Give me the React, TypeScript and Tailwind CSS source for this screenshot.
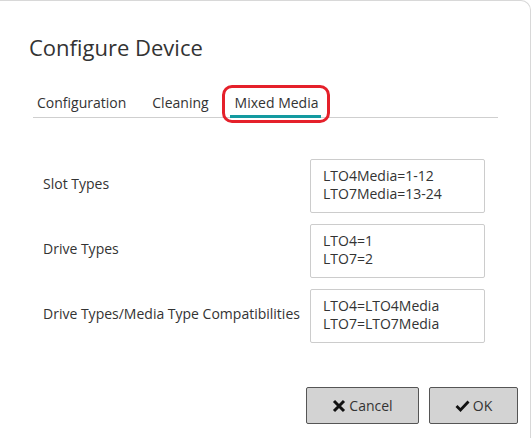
import React from "react";

const rows: { label: string; lines: string[] }[] = [
  { label: "Slot Types", lines: ["LTO4Media=1-12", "LTO7Media=13-24"] },
  { label: "Drive Types", lines: ["LTO4=1", "LTO7=2"] },
  { label: "Drive Types/Media Type Compatibilities", lines: ["LTO4=LTO4Media", "LTO7=LTO7Media"] },
];

function XIcon() {
  return (
    <svg width="14" height="14" viewBox="0 0 14 14">
      <path d="M2 2 L12 12 M12 2 L2 12" stroke="#111" strokeWidth="3" strokeLinecap="butt" />
    </svg>
  );
}

function CheckIcon() {
  return (
    <svg width="15" height="12" viewBox="0 0 15 12">
      <path d="M1.5 6 L5.5 10 L13.5 1.5" stroke="#111" strokeWidth="2.8" fill="none" />
    </svg>
  );
}

export default function App() {
  return (
    <div
      className="relative w-[531px] h-[438px] bg-white overflow-hidden text-[#333]"
      style={{ fontFamily: '"Open Sans", "Noto Sans", sans-serif' }}
    >
      {/* dialog frame */}
      <div className="absolute inset-0 rounded-tr-[10px] border-t border-r border-[#d8d8d8] pointer-events-none" />

      <div className="pl-[29px] pt-[30px]">
        <h1 className="text-[22px] leading-[34px] text-[#333]">Configure Device</h1>
      </div>

      {/* tabs */}
      <div className="relative mx-[33px] mt-[15px] flex h-[39px] items-start border-b border-[#cfcfcf] text-[14px]">
        <div className="pl-[4px] pt-[14px] leading-[20px]">Configuration</div>
        <div className="pl-[26px] pt-[14px] leading-[20px]">Cleaning</div>
        <div className="ml-[21px] flex flex-col pt-[14px]">
          <div className="px-[5px] leading-[20px]">Mixed Media</div>
          <div className="mt-[2px] h-[3px] w-[91px] bg-[#139aa0]" />
        </div>
        <div className="absolute left-[189px] top-[6px] h-[38px] w-[108px] rounded-[10px] border-[3px] border-[#e5202a]" />
      </div>

      {/* fields */}
      <div className="mt-[41px] flex flex-col gap-[11px] pl-[43px] text-[14px]">
        {rows.map((r) => (
          <div key={r.label} className="flex items-center">
            <div className="mb-[4px] w-[267px] leading-[20px]">{r.label}</div>
            <div className="h-[54px] w-[175px] rounded-[2px] border border-[#cccccc] pl-[12px] pt-[7px] leading-[18px]">
              {r.lines.map((l) => (
                <div key={l}>{l}</div>
              ))}
            </div>
          </div>
        ))}
      </div>

      {/* actions */}
      <div className="mt-[44px] flex justify-end gap-[10px] pr-[13px] text-[14px]">
        <button className="flex h-[37px] w-[113px] items-center justify-center gap-[3px] rounded-[2px] border border-[#555] bg-[#d3d3d3] text-[#333]">
          <XIcon />
          <span>Cancel</span>
        </button>
        <button className="flex h-[37px] w-[89px] items-center justify-center gap-[3px] rounded-[2px] border border-[#555] bg-[#d3d3d3] text-[#333]">
          <CheckIcon />
          <span>OK</span>
        </button>
      </div>
    </div>
  );
}
